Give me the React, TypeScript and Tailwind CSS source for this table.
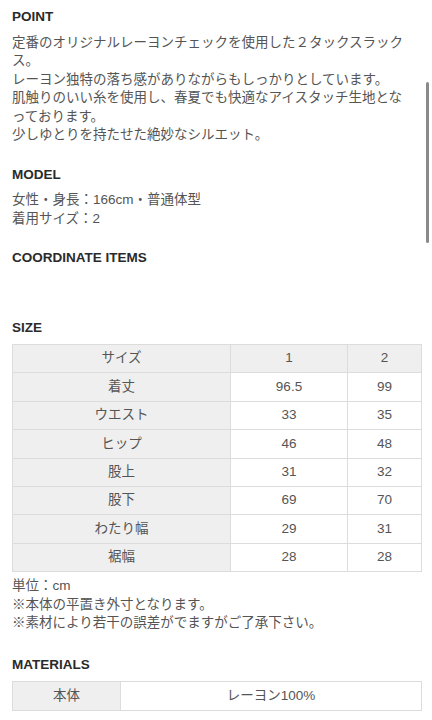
const FONT = "font-['Liberation_Sans','Noto_Sans_CJK_JP',sans-serif]";

const sizeRows: [string, string, string][] = [
  ["着丈", "96.5", "99"],
  ["ウエスト", "33", "35"],
  ["ヒップ", "46", "48"],
  ["股上", "31", "32"],
  ["股下", "69", "70"],
  ["わたり幅", "29", "31"],
  ["裾幅", "28", "28"],
];

function Heading({ children, className = "" }: { children: React.ReactNode; className?: string }) {
  return (
    <h2 className={`text-[13.5px] leading-[18.5px] font-bold text-[#2a2a2a] ${className}`}>{children}</h2>
  );
}

export default function App() {
  const cell = "border border-[#dcdcdc] h-[28.4px] p-0 text-center align-middle font-normal";
  return (
    <div className={`relative w-[432px] h-[720px] overflow-hidden bg-white ${FONT}`}>
      <div className="pl-3 pr-[11px] pt-[8px] text-[13.5px] leading-[18.5px] text-[#555]">
        <Heading>POINT</Heading>
        <p className="mt-[7px]">
          定番のオリジナルレーヨンチェックを使用した２タックスラック
          <br />
          ス。
          <br />
          レーヨン独特の落ち感がありながらもしっかりとしています。
          <br />
          肌触りのいい糸を使用し、春夏でも快適なアイスタッチ生地とな
          <br />
          っております。
          <br />
          少しゆとりを持たせた絶妙なシルエット。
        </p>

        <Heading className="mt-[21px]">MODEL</Heading>
        <p className="mt-[7px]">
          女性・身長：166cm・普通体型
          <br />
          着用サイズ：2
        </p>

        <Heading className="mt-[21px]">COORDINATE ITEMS</Heading>

        <Heading className="mt-[51px]">SIZE</Heading>
        <table className="mt-[7px] w-[409px] border-collapse table-fixed">
          <colgroup>
            <col className="w-[218px]" />
            <col className="w-[117px]" />
            <col className="w-[74px]" />
          </colgroup>
          <thead>
            <tr className="bg-[#efefef]">
              <th className={cell}>サイズ</th>
              <th className={cell}>1</th>
              <th className={cell}>2</th>
            </tr>
          </thead>
          <tbody>
            {sizeRows.map(([label, a, b]) => (
              <tr key={label}>
                <td className={`${cell} bg-[#efefef]`}>{label}</td>
                <td className={cell}>{a}</td>
                <td className={cell}>{b}</td>
              </tr>
            ))}
          </tbody>
        </table>
        <p className="mt-[5px]">
          単位：cm
          <br />
          ※本体の平置き外寸となります。
          <br />
          ※素材により若干の誤差がでますがご了承下さい。
        </p>

        <Heading className="mt-[23px]">MATERIALS</Heading>
        <table className="mt-[7px] w-[409px] border-collapse table-fixed">
          <colgroup>
            <col className="w-[108px]" />
            <col className="w-[301px]" />
          </colgroup>
          <tbody>
            <tr>
              <td className={`${cell} bg-[#efefef]`}>本体</td>
              <td className={cell}>レーヨン100%</td>
            </tr>
          </tbody>
        </table>
      </div>

      {/* scroll indicator */}
      <div className="absolute left-[426px] top-[82px] w-[3px] h-[161px] rounded-full bg-[#8a8a8a]" />
    </div>
  );
}
